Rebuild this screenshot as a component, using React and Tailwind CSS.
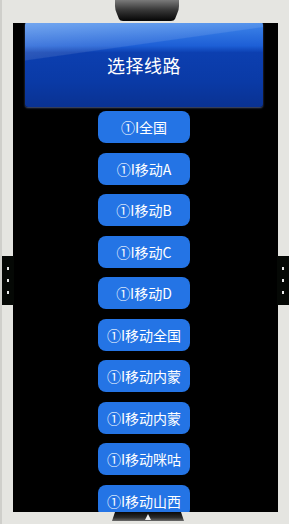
import React from "react";

const lines = [
  "①I全国",
  "①I移动A",
  "①I移动B",
  "①I移动C",
  "①I移动D",
  "①I移动全国",
  "①I移动内蒙",
  "①I移动内蒙",
  "①I移动咪咕",
  "①I移动山西",
];

const SideClip = ({ side }) => (
  <div
    className={`absolute top-[256px] h-[49px] w-[12px] bg-[#050805] flex flex-col items-center justify-center gap-[9px] ${
      side === "left" ? "left-0" : "right-0"
    }`}
  >
    <span className="w-[2px] h-[3px] bg-[#e8e8e8]" />
    <span className="w-[2px] h-[3px] bg-[#e8e8e8]" />
    <span className="w-[2px] h-[3px] bg-[#e8e8e8]" />
  </div>
);

export default function App() {
  return (
    <div
      className="relative w-[289px] h-[524px] overflow-hidden bg-[#e5e5e1] border-l-2 border-[#cfcfcb] flex flex-col"
      style={{ fontFamily: '"Noto Sans CJK SC", "Noto Sans", sans-serif' }}
    >
      {/* top notch */}
      <div className="h-[23px] shrink-0 flex">
        <svg width="64" height="22" viewBox="0 0 64 22" className="ml-[113px]">
          <defs>
            <linearGradient id="topNotch" x1="0" y1="0" x2="0" y2="1">
              <stop offset="0" stopColor="#7a7a7a" />
              <stop offset="0.45" stopColor="#3a3a3a" />
              <stop offset="1" stopColor="#050505" />
            </linearGradient>
          </defs>
          <path d="M0 0 H64 V6 Q64 10 62 14 L60 19 Q59 21 56 21 H8 Q5 21 4 19 L2 14 Q0 10 0 6 Z" fill="url(#topNotch)" />
        </svg>
      </div>

      {/* screen */}
      <div className="ml-[11px] w-[265px] h-[489px] shrink-0 bg-black overflow-hidden flex flex-col">
        <div className="ml-[12px] -mt-px w-[238px] h-[85px] shrink-0 rounded-[3px] shadow-[0_1px_2px_rgba(120,140,200,0.6)] bg-[linear-gradient(172deg,rgba(255,255,255,0.28)_0%,rgba(255,255,255,0.1)_32%,rgba(255,255,255,0)_33%),linear-gradient(180deg,#3f86ea_0%,#1d5fd6_28%,#0c3fb0_36%,#0a3aa6_70%,#0a3292_100%)] flex items-center justify-center">
          <span className="text-white text-[18px] leading-none tracking-[0.5px]">选择线路</span>
        </div>

        <div className="mt-[4px] pr-[3px] flex flex-col items-center gap-[9.5px]">
          {lines.map((t, i) => (
            <div
              key={i}
              className="h-[32px] min-w-[92px] px-[8px] shrink-0 rounded-[8px] bg-[#2474e5] flex items-center justify-center text-white text-[14px] leading-none whitespace-nowrap"
            >
              {t}
            </div>
          ))}
        </div>
      </div>

      {/* bottom notch */}
      <div className="flex-1 flex">
        <svg width="72" height="10" viewBox="0 0 72 10" className="ml-[110px]">
          <defs>
            <linearGradient id="botNotch" x1="0" y1="0" x2="0" y2="1">
              <stop offset="0" stopColor="#0a0a0a" />
              <stop offset="0.6" stopColor="#2a2a2a" />
              <stop offset="1" stopColor="#6a6a6a" />
            </linearGradient>
          </defs>
          <path d="M3 0 H69 L72 9 H0 Z" fill="url(#botNotch)" />
          <path d="M36 2 L39 8 H33 Z" fill="#f0f0f0" />
        </svg>
      </div>

      <SideClip side="left" />
      <SideClip side="right" />
    </div>
  );
}
